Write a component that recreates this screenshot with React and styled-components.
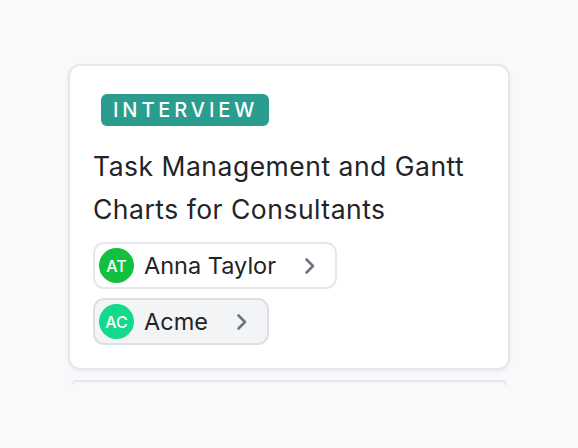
import React from "react";
import styled, { createGlobalStyle } from "styled-components";

const Global = createGlobalStyle`
  html, body { margin: 0; padding: 0; background: #f8f9fb; }
  body { font-family: Inter, "Noto Sans", sans-serif; -webkit-font-smoothing: antialiased; }
`;

const Page = styled.div`
  width: 578px;
  height: 448px;
  overflow: hidden;
  box-sizing: border-box;
  padding-top: 64px;
  display: flex;
  flex-direction: column;
  align-items: center;
  gap: 10px;
`;

const Card = styled.div`
  box-sizing: border-box;
  width: 442px;
  background: #fff;
  border: 2px solid #e6e7ea;
  border-radius: 12px;
  box-shadow: 0 2px 4px rgba(16, 24, 40, 0.05);
  padding: 28px 23px 23px;
  display: flex;
  flex-direction: column;
  align-items: flex-start;
`;

const NextCard = styled.div`
  box-sizing: border-box;
  width: 436px;
  height: 5px;
  flex-shrink: 0;
  background: #f8f9fb;
  border: 2px solid #e6e7ea;
  border-bottom: none;
  border-radius: 12px 12px 0 0;
`;

const Badge = styled.span`
  margin-left: 8px;
  height: 32px;
  box-sizing: border-box;
  padding: 0 11px 0 12px;
  display: inline-flex;
  align-items: center;
  background: #2a9d8f;
  color: #fff;
  border-radius: 6px;
  font-size: 20px;
  font-weight: 500;
  letter-spacing: 3.9px;
  text-transform: uppercase;
`;

const Title = styled.h2`
  margin: 19px 0 11px;
  font-size: 26.5px;
  line-height: 43px;
  font-weight: 400;
  color: #222426;
  letter-spacing: 0.5px;
`;

const Chips = styled.div`
  display: flex;
  flex-direction: column;
  align-items: flex-start;
  gap: 9px;
`;

const Chip = styled.div`
  box-sizing: border-box;
  height: 47px;
  display: inline-flex;
  align-items: center;
  padding: 0 18px 0 4px;
  border-radius: 11px;
  border: 2px solid ${(p) => (p.$muted ? "#dcdfe3" : "#e6e7ea")};
  background: ${(p) => (p.$muted ? "#f3f4f5" : "#fff")};
`;

const Avatar = styled.span`
  width: 35px;
  height: 35px;
  border-radius: 50%;
  background: ${(p) => p.$color};
  color: #fff;
  display: inline-flex;
  align-items: center;
  justify-content: center;
  font-size: 16px;
  font-weight: 500;
`;

const Name = styled.span`
  margin-left: 10px;
  font-size: 23.5px;
  color: #222426;
`;

const Chevron = styled.svg`
  margin-left: 27px;
  width: 14px;
  height: 18px;
`;

const ChevronIcon = () => (
  <Chevron viewBox="0 0 14 18" fill="none">
    <path d="M3.5 2.5 L10 9 L3.5 15.5" stroke="#6b7480" strokeWidth="2.6" strokeLinecap="round" strokeLinejoin="round" />
  </Chevron>
);

const people = [
  { initials: "AT", name: "Anna Taylor", color: "#12c03f", muted: false },
  { initials: "AC", name: "Acme", color: "#12da8b", muted: true },
];

export default function App() {
  return (
    <>
      <Global />
      <Page>
        <Card>
          <Badge>Interview</Badge>
          <Title>
            Task Management and Gantt
            <br />
            Charts for Consultants
          </Title>
          <Chips>
            {people.map((p) => (
              <Chip key={p.initials} $muted={p.muted}>
                <Avatar $color={p.color}>{p.initials}</Avatar>
                <Name>{p.name}</Name>
                <ChevronIcon />
              </Chip>
            ))}
          </Chips>
        </Card>
        <NextCard />
      </Page>
    </>
  );
}
